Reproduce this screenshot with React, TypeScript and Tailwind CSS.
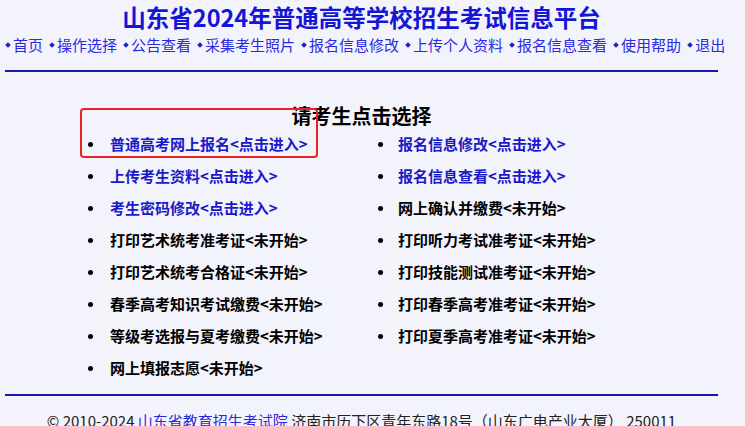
const navItems = ['首页', '操作选择', '公告查看', '采集考生照片', '报名信息修改', '上传个人资料', '报名信息查看', '使用帮助', '退出']

type Item = { label: string; open: boolean }

const leftItems: Item[] = [
  { label: '普通高考网上报名', open: true },
  { label: '上传考生资料', open: true },
  { label: '考生密码修改', open: true },
  { label: '打印艺术统考准考证', open: false },
  { label: '打印艺术统考合格证', open: false },
  { label: '春季高考知识考试缴费', open: false },
  { label: '等级考选报与夏考缴费', open: false },
  { label: '网上填报志愿', open: false },
]

const rightItems: Item[] = [
  { label: '报名信息修改', open: true },
  { label: '报名信息查看', open: true },
  { label: '网上确认并缴费', open: false },
  { label: '打印听力考试准考证', open: false },
  { label: '打印技能测试准考证', open: false },
  { label: '打印春季高考准考证', open: false },
  { label: '打印夏季高考准考证', open: false },
]

function Row({ item, gap }: { item: Item; gap: string }) {
  return (
    <div className="flex h-[32px] items-center">
      <span className="h-[5px] w-[5px] shrink-0 rounded-full bg-black" />
      <span
        className={`${gap} whitespace-nowrap text-[15px] font-bold ${item.open ? 'text-[#1a1ac8]' : 'text-black'}`}
      >
        {item.label}
        {item.open ? '<点击进入>' : '<未开始>'}
      </span>
    </div>
  )
}

export default function App() {
  return (
    <div
      className="relative h-[426px] w-[745px] overflow-hidden bg-[#f3f3fc]"
      style={{ fontFamily: '"Noto Sans CJK SC", "Noto Sans", sans-serif' }}
    >
      <div className="ml-[5px] flex w-[713px] flex-col">
        {/* Title */}
        <h1 className="h-[34px] text-center text-[23.5px] font-bold leading-[34px] text-[#1515d6]">
          山东省2024年普通高等学校招生考试信息平台
        </h1>

        {/* Nav */}
        <div className="flex h-[22px] items-center whitespace-nowrap text-[15px] leading-[22px] text-[#2a2ae0]">
          {navItems.map((n, i) => (
            <a key={n} href="#" className={`flex items-center ${i > 0 ? 'ml-[7px]' : 'ml-[1px]'}`}>
              <span className="flex w-[7px] items-center">
                <span className="h-[4px] w-[4px] rotate-45 bg-[#2020c8]" />
              </span>
              {n}
            </a>
          ))}
        </div>

        <div className="mt-[14px] h-[2px] bg-[#1818b0]" />

        {/* Heading */}
        <h2 className="mt-[32px] h-[24px] text-center text-[20px] font-bold leading-[24px] text-black">
          请考生点击选择
        </h2>

        {/* Options */}
        <div className="flex">
          <div className="ml-[83px] w-[290px]">
            {leftItems.map((it) => (
              <Row key={it.label} item={it} gap="ml-[17px]" />
            ))}
          </div>
          <div>
            {rightItems.map((it) => (
              <Row key={it.label} item={it} gap="ml-[15px]" />
            ))}
          </div>
        </div>

        <div className="mt-[10px] h-[2px] bg-[#1818b0]" />

        {/* Footer */}
        <p className="mt-[13px] whitespace-nowrap text-center text-[15px] leading-[24px] text-[#222]">
          © 2010-2024 <a href="#" className="text-[#2a2ad8]">山东省教育招生考试院</a> 济南市历下区青年东路18号（山东广电产业大厦） 250011
        </p>
      </div>

      {/* highlight box */}
      <div className="absolute left-[80px] top-[108px] h-[50px] w-[238px] rounded-[4px] border-2 border-[#e8231f]" />
    </div>
  )
}
